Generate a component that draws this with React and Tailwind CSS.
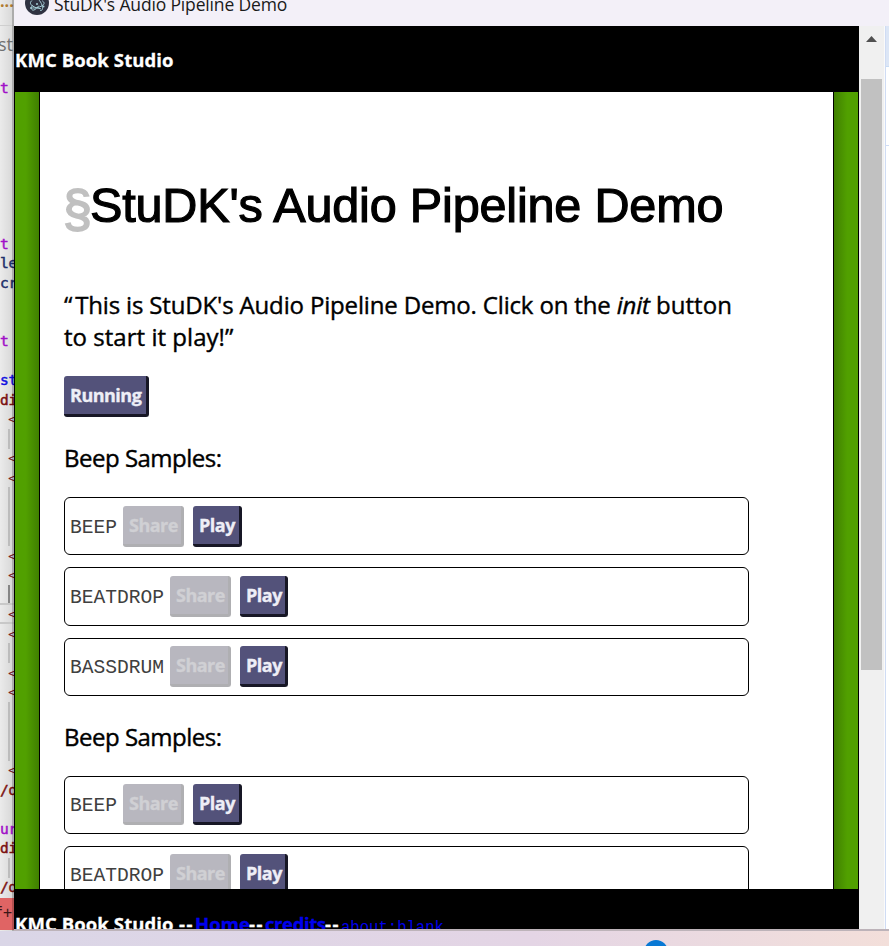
const codeRows = [
  { t: "t", c: "text-[#a010c8]" }, {}, {}, {}, {}, {}, {}, {},
  { t: "t", c: "text-[#a010c8]" },
  { t: "le", c: "text-[#1f2f6b]" },
  { t: "cr", c: "text-[#1f2f6b]" },
  {}, {},
  { t: "t", c: "text-[#a010c8]" },
  {},
  { t: "st", c: "text-[#1010e0]" },
  { t: "di", c: "text-[#7a1010]" },
  { t: "<", tag: true }, { bar: true }, { t: "<", tag: true }, { t: "<", tag: true },
  { bar: true }, { bar: true }, { bar: true },
  { t: "<", tag: true }, { t: "<", tag: true }, { bar: true, dark: true },
  { t: "<", tag: true, current: true }, { t: "<", tag: true }, { bar: true },
  { t: "<", tag: true }, { t: "<", tag: true },
  { bar: true }, { bar: true }, { bar: true },
  { t: "<", tag: true },
  { t: "/d", c: "text-[#7a1010]" },
  {},
  { t: "ur", c: "text-[#a010c8]" },
  { t: "di", c: "text-[#7a1010]" },
  { bar: true },
  { t: "/d", c: "text-[#7a1010]" },
];

function CodeRow({ row }) {
  return (
    <div
      className={
        "h-[19.5px] w-[30px] shrink-0 whitespace-pre pt-[0.5px] font-['DejaVu_Sans_Mono',monospace] text-[14.5px] leading-[18px] tracking-[-0.3px] [-webkit-text-stroke:0.5px_currentColor] " +
        (row.c || "text-[#7a1f1f]") +
        (row.current ? " shadow-[0_-2px_0_#c8c8c8,inset_0_-2px_0_#c8c8c8]" : "")
      }
    >
      {row.bar && (
        <div className={"-mt-px ml-2 h-[20px] w-[2px] " + (row.dark ? "bg-[#858585]" : "bg-[#bcbcbc]")} />
      )}
      {row.t && <span className={row.tag ? "ml-[8px] [-webkit-text-stroke:0px]" : ""}>{row.t}</span>}
    </div>
  );
}

function EditorStrip() {
  return (
    <div className="relative flex h-[931px] w-[14px] shrink-0 flex-col overflow-hidden bg-linear-to-r from-[#ebebeb] to-[#d6d6d6]">
      <div className="h-[26px] w-10 shrink-0 border-b border-[#cfcfcf] font-['Open_Sans',sans-serif] text-[16px] font-bold leading-[2px] text-[#b07a30]">
        ...
      </div>
      <div className="h-[52px] w-10 shrink-0 pt-[7px] font-['Open_Sans',sans-serif] text-[18px] leading-[22px] text-[#707070]">
        <span className="-ml-0.5">str</span>
      </div>
      {codeRows.map((row, i) => (
        <CodeRow key={i} row={row} />
      ))}
      <div className="mt-px h-[32px] w-4 shrink-0 bg-[#e06464] pt-[5px] font-['DejaVu_Sans_Mono',monospace] text-[15px] leading-[20px] text-[#3b1717]">
        <span className="-ml-[6px]">f+</span>
      </div>
      <div className="absolute right-0 top-0 h-full w-[2px] bg-black/20" />
    </div>
  );
}

const buttonBase =
  "box-border flex h-[41px] shrink-0 items-center rounded-[3px] border-r-[3px] border-b-[3px] font-['Open_Sans',sans-serif] text-[18px] font-bold leading-none tracking-[-0.5px] pl-[6px] [-webkit-text-stroke:0.35px_currentColor] ";

function Button({ children, width, disabled }) {
  return (
    <button
      className={
        buttonBase + width + " " +
        (disabled
          ? "border-[#afafb2] bg-[#b8b7bf] text-[#d0d0d4]"
          : "border-[#171725] bg-[#53527a] text-[#eeeef6]")
      }
    >
      {children}
    </button>
  );
}

function Sample({ name, height, top, inset = "pt-2", playWidth, labelWidth }) {
  return (
    <div className={"flex w-[685px] shrink-0 items-start rounded-md border border-black pl-[5px] " + height + " " + top + " " + inset}>
      <div className={"mt-[10px] font-['Liberation_Mono',monospace] text-[19.6px] leading-[24px] text-[#404040] " + labelWidth}>{name}</div>
      <div className="flex gap-[9px]">
        <Button width="w-[61px]" disabled>Share</Button>
        <Button width={playWidth}>Play</Button>
      </div>
    </div>
  );
}

function SectionTitle({ children }) {
  return (
    <h2 className="font-['Open_Sans',sans-serif] text-[24px] leading-[32px] tracking-[-0.5px] [-webkit-text-stroke:0.4px_currentColor]">{children}</h2>
  );
}

function ElectronIcon() {
  return (
    <svg className="mt-[-9px] h-6 w-6 shrink-0" viewBox="0 0 24 24" fill="none">
      <circle cx="12" cy="12" r="12" fill="#2f3241" />
      <g stroke="#a5cdd6" strokeWidth="1" strokeLinecap="round">
        <path d="M7 9.5C4.800 11 4.500 13 8 15.200C10.500 16.800 13 17.500 15.500 17.700" />
        <path d="M9.500 6.500C12 6 15.500 10 17 14C18.200 17.500 17.500 20 15.500 19.500" />
        <path d="M17.500 10C19.500 11.200 20 13 17 14.800C14 16.500 10 17.400 7.500 17" />
        <path d="M7 14.500C6 17.500 6.500 19.800 9 19C10.500 18.400 12 17 13.500 15" />
      </g>
      <g fill="#a5cdd6">
        <circle cx="12" cy="13" r="1" />
        <circle cx="6" cy="17" r="1" />
        <circle cx="18.500" cy="15.500" r="1" />
      </g>
    </svg>
  );
}

function Page() {
  return (
    <div className="flex h-[797px] w-[845px] border-x border-black">
      <div className="w-6 shrink-0 bg-linear-to-r from-[#51a000] from-45% to-[#408000]" />
      <main className="flex h-full w-[795px] flex-col overflow-hidden border-x border-black bg-white pl-6 text-black">
        <h1 className="mt-[85px] flex h-[56px] shrink-0 whitespace-nowrap font-['Liberation_Sans',sans-serif] text-[48.6px] leading-[56px] tracking-[-0.2px] [-webkit-text-stroke:1.2px_currentColor]">
          <span className="ml-[-1px] mt-1 w-[27px] text-[52px] text-[#c0c0c0] [-webkit-text-stroke:1.8px_currentColor]">§</span>
          <span>StuDK's Audio Pipeline Demo</span>
        </h1>
        <p className="mt-[56px] shrink-0 whitespace-nowrap font-['Open_Sans',sans-serif] text-[24px] leading-[32px] tracking-[-0.16px] [-webkit-text-stroke:0.4px_currentColor]">
          <span className="mr-[3px]">“</span>This is StuDK's Audio Pipeline Demo. Click on the <em>init</em> <span className="tracking-[0.05px]">button</span>
          <br />
          <span className="tracking-[0.03px]">to start it play!”</span>
        </p>
        <div className="mt-[23px] shrink-0">
          <Button width="w-[85px]">Running</Button>
        </div>
        <div className="mt-[25px] shrink-0"><SectionTitle>Beep Samples:</SectionTitle></div>
        <Sample name="BEEP" height="h-[58px]" top="mt-[23px]" labelWidth="w-[53px]" playWidth="w-[49px]" />
        <Sample name="BEATDROP" height="h-[59px]" top="mt-[12px]" labelWidth="w-[100px]" playWidth="w-[48px]" />
        <Sample name="BASSDRUM" height="h-[58px]" top="mt-[12px]" inset="pt-[7px]" labelWidth="w-[100px]" playWidth="w-[48px]" />
        <div className="mt-[25px] shrink-0"><SectionTitle>Beep Samples:</SectionTitle></div>
        <Sample name="BEEP" height="h-[58px]" top="mt-[23px]" inset="pt-[7px]" labelWidth="w-[53px]" playWidth="w-[49px]" />
        <Sample name="BEATDROP" height="h-[59px]" top="mt-[12px]" inset="pt-[7px]" labelWidth="w-[100px]" playWidth="w-[48px]" />
      </main>
      <div className="w-6 shrink-0 bg-linear-to-l from-[#51a000] from-45% to-[#408000]" />
    </div>
  );
}

function Scrollbar() {
  return (
    <div className="flex w-[25px] shrink-0 flex-col items-center bg-[#f0f0f0]">
      <svg className="mt-[10px] h-[6px] w-[11px]" viewBox="0 0 11 6"><path d="M5.5 0L11 6H0Z" fill="#505050" /></svg>
      <div className="mt-[37px] h-[591px] w-[21px] bg-[#c1c1c1]" />
    </div>
  );
}

export default function App() {
  return (
    <div className="flex h-[946px] w-[889px] flex-col overflow-hidden bg-white">
      <div className="flex h-[931px] shrink-0">
        <EditorStrip />
        <div className="flex w-[875px] shrink-0 flex-col">
          <header className="flex h-[26px] shrink-0 items-start gap-[5px] overflow-hidden bg-[#f3f0f8] pl-[11px]">
            <ElectronIcon />
            <span className="mt-[-8px] whitespace-nowrap font-['Open_Sans',sans-serif] text-[17.5px] leading-[24px] tracking-[-0.16px] text-[#1a1a1a]">
              StuDK's Audio Pipeline Demo
            </span>
          </header>
          <div className="flex h-[903px] shrink-0">
            <div className="flex w-[845px] shrink-0 flex-col">
              <div className="h-[66px] shrink-0 bg-black pl-px pt-[22px] font-['Open_Sans',sans-serif] text-[18.5px] font-bold leading-[24px] tracking-[0.1px] text-white [-webkit-text-stroke:0.3px_currentColor]">
                KMC Book Studio
              </div>
              <Page />
              <footer className="flex h-[40px] shrink-0 overflow-hidden whitespace-pre bg-black pl-px pt-[23px] font-['Open_Sans',sans-serif] text-[18.5px] font-bold leading-[24px] tracking-[0.1px] text-white [-webkit-text-stroke:0.3px_currentColor]">
                <span className="w-[164px]">KMC Book Studio </span>
                <span className="w-[16px] tracking-[1.5px]">--</span>
                <a className="w-[54px] text-[#0000ee] underline">Home</a>
                <span className="w-[16px] tracking-[1.5px]">--</span>
                <a className="w-[60px] tracking-[-0.4px] text-[#0000ee] underline">credits</a>
                <span className="w-[16px] tracking-[1.5px]">--</span>
                <a className="pt-[4px] font-['Liberation_Mono',monospace] text-[15.6px] font-normal tracking-normal text-[#0000ee] underline [-webkit-text-stroke:0px]">about:blank</a>
              </footer>
            </div>
            <Scrollbar />
            <div className="flex w-[5px] shrink-0 flex-col border-l border-[#fafafa] bg-white">
              <div className="flex h-full flex-col border-l border-[#cfdcf4]">
                <div className="h-[41px] border-b border-[#c8dcf4] bg-[#dce6f6]" />
                <div className="h-[79px] border-b border-[#cfdcf4]" />
              </div>
            </div>
          </div>
          <div className="h-[2px] shrink-0 bg-[#bdb3b9]" />
        </div>
      </div>
      <div className="flex h-[15px] shrink-0 overflow-hidden bg-linear-to-r from-[#dad6e7] via-[#e4d5e5] via-60% to-[#f3dfda] pl-[644px]">
        <div className="mt-[9px] h-6 w-6 shrink-0 rounded-full bg-[#0878d4]" />
      </div>
    </div>
  );
}
